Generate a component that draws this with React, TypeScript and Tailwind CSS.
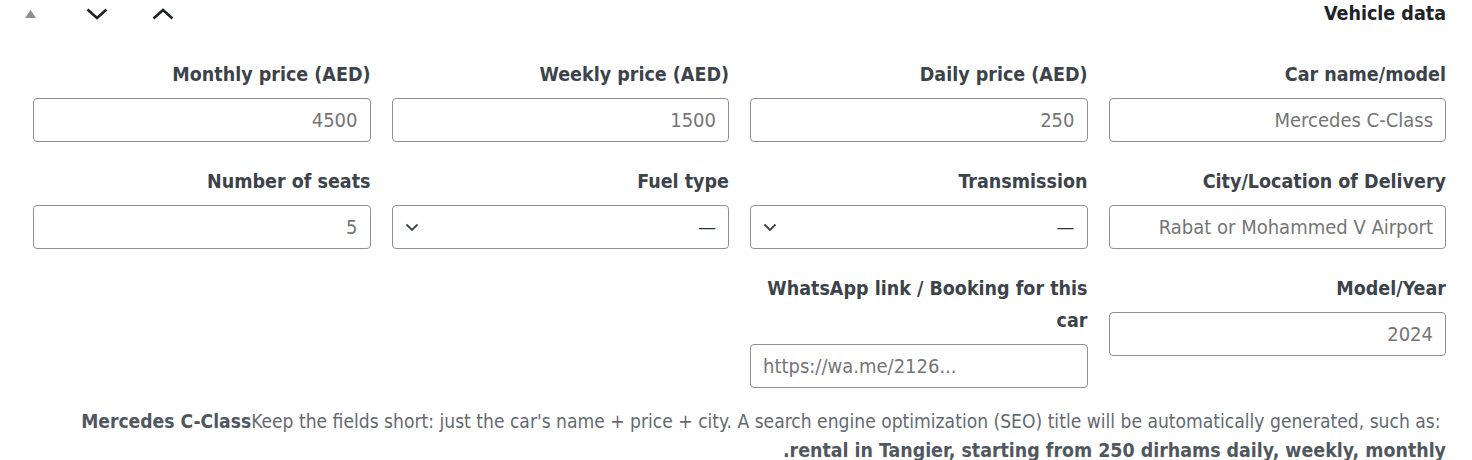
import React from 'react';

function ChevronDown() {
  return (
    <svg width="22" height="12" viewBox="0 0 22 12" fill="none">
      <polyline points="1.5,1.5 11,10 20.5,1.5" stroke="#1d2327" strokeWidth="2.6" strokeLinejoin="miter" />
    </svg>
  );
}

function ChevronUp() {
  return (
    <svg width="22" height="12" viewBox="0 0 22 12" fill="none">
      <polyline points="1.5,10.5 11,2 20.5,10.5" stroke="#1d2327" strokeWidth="2.6" strokeLinejoin="miter" />
    </svg>
  );
}

function SmallChevron() {
  return (
    <svg width="14" height="9" viewBox="0 0 14 9" fill="none">
      <polyline points="1.5,1.5 7,7 12.5,1.5" stroke="#3c434a" strokeWidth="1.8" />
    </svg>
  );
}

function Label({ children }: { children: React.ReactNode }) {
  return (
    <label className="mb-[7px] text-right text-[19.5px] font-bold leading-[32px] text-[#3c434a]">{children}</label>
  );
}

function TextField({ label, placeholder, ltr }: { label: string; placeholder: string; ltr?: boolean }) {
  return (
    <div className="flex flex-col">
      <Label>{label}</Label>
      <input
        dir={ltr ? 'ltr' : 'rtl'}
        placeholder={placeholder}
        className="h-[44px] w-full rounded-[4px] border border-[#8c8f94] bg-white px-[12px] text-[20px] text-[#2c3338] outline-none placeholder:text-[#757575]"
      />
    </div>
  );
}

function SelectField({ label }: { label: string }) {
  return (
    <div className="flex flex-col">
      <Label>{label}</Label>
      <div className="flex h-[44px] w-full items-center justify-between rounded-[4px] border border-[#8c8f94] bg-white pl-[12px] pr-[12px] text-[20px] text-[#2c3338]">
        <span>—</span>
        <SmallChevron />
      </div>
    </div>
  );
}

export default function App() {
  return (
    <div dir="rtl" className="min-h-[460px] w-full bg-white font-['DejaVu_Sans_Condensed',sans-serif]">
      <div className="flex h-[28px] items-center justify-between pr-[26px]">
        <h2 className="text-[19.5px] font-bold text-[#1d2327]">Vehicle data</h2>
        <div dir="ltr" className="flex items-center pl-[25px]">
          <svg width="11" height="8" viewBox="0 0 11 8">
            <polygon points="0,8 5.5,0 11,8" fill="#8c8f94" />
          </svg>
          <span className="ml-[50px] flex"><ChevronDown /></span>
          <span className="ml-[44px] flex"><ChevronUp /></span>
        </div>
      </div>

      <div className="mt-[31px] pl-[33px] pr-[26px]">
        <div className="grid grid-cols-4 items-start gap-x-[21px] gap-y-[24px]">
          <TextField label="Car name/model" placeholder="Mercedes C-Class" />
          <TextField label="Daily price (AED)" placeholder="250" />
          <TextField label="Weekly price (AED)" placeholder="1500" />
          <TextField label="Monthly price (AED)" placeholder="4500" />

          <TextField label="City/Location of Delivery" placeholder="Rabat or Mohammed V Airport" />
          <SelectField label="Transmission" />
          <SelectField label="Fuel type" />
          <TextField label="Number of seats" placeholder="5" />

          <TextField label="Model/Year" placeholder="2024" />
          <TextField label="WhatsApp link / Booking for this car" placeholder="https://wa.me/2126..." ltr />
        </div>

        <p className="mt-[19px] text-right text-[19.1px] leading-[29px] text-[#646970]">
          <strong className="font-bold text-[#50575e]">Mercedes C-Class</strong>Keep the fields short: just the car's name + price + city. A search engine optimization (SEO) title will be automatically generated, such as:{'\u00A0\u200E'}
          <br />
          <strong className="text-[19.4px] font-bold text-[#50575e]">rental in Tangier, starting from 250 dirhams daily, weekly, monthly.</strong>
        </p>
      </div>
    </div>
  );
}
